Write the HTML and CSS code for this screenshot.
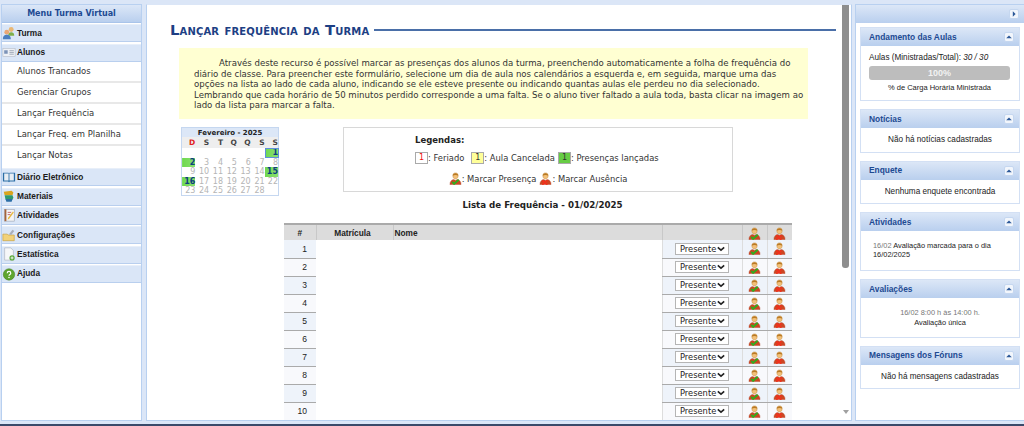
FILE: index.html
```html
<!DOCTYPE html>
<html lang="pt-BR">
<head>
<meta charset="utf-8">
<title>Lançar frequência da Turma</title>
<link rel="stylesheet" href="styles.css">
</head>
<body>
<svg class="defs" width="0" height="0" aria-hidden="true">
  <symbol id="person" viewBox="0 0 14 14">
    <path d="M4.200 4.500C4 2 5.200 1 7 1s3 1 2.800 3.500C9.600 6.400 8.400 7.500 7 7.500S4.400 6.400 4.200 4.500Z" fill="#f2c078" stroke="#c48a3c" stroke-width=".5"/>
    <path d="M4 4C4.300 .6 9.700 .6 10 4 8.500 2.900 5.500 2.900 4 4Z" fill="#b97a25"/>
    <path d="M1 13.500C1 10 3 8.200 5 8L7 9.200 9 8C11 8.200 13 10 13 13.500Z" fill="#cf4522" stroke="#a83c1c" stroke-width=".4"/>
  </symbol>
  <symbol id="presenca" viewBox="0 0 14 14">
    <use href="#person"/>
    <path d="M3.500 10.500L5.500 12.800 10.500 8.300" fill="none" stroke="#2fae1e" stroke-width="2"/>
  </symbol>
  <symbol id="ausencia" viewBox="0 0 14 14">
    <use href="#person"/>
    <path d="M3.500 9L9 13.800M9 9L3.500 13.800" fill="none" stroke="#f2301c" stroke-width="1.700"/>
  </symbol>
  <symbol id="collapse" viewBox="0 0 10 10"><path d="M1.500 6.500L5 3 8.500 6.500Z" fill="#2b5797"/></symbol>
</svg>

<div class="app">
  <aside class="menu">
    <h2 class="menu-title">Menu Turma Virtual</h2>
    <div class="menu-group">
      <svg class="mi" viewBox="0 0 16 16"><circle cx="10.500" cy="4" r="2.800" fill="#e9b774"/><path d="M7 11c0-3 1.500-4 3.500-4s3.500 1 3.500 4Z" fill="#7fb04a"/><circle cx="5.500" cy="7" r="2.800" fill="#e9a774"/><path d="M1 15c0-4 2-5 4.500-5S10 11 10 15Z" fill="#4a7fc0"/></svg>
      <span>Turma</span>
    </div>
    <div class="menu-group">
      <svg class="mi" viewBox="0 0 16 16"><rect x="1" y="4" width="14" height="9" fill="#eef1f6" stroke="#b6bcc8" stroke-width=".7"/><rect x="2.500" y="6" width="4" height="4" fill="#7c93b8"/><path d="M8.500 6.500h5M8.500 8.500h5M8.500 10.500h5" stroke="#9aa3b2"/></svg>
      <span>Alunos</span>
    </div>
    <ul class="submenu">
      <li>Alunos Trancados</li>
      <li>Gerenciar Grupos</li>
      <li>Lançar Frequência</li>
      <li>Lançar Freq. em Planilha</li>
      <li>Lançar Notas</li>
    </ul>
    <div class="menu-group">
      <svg class="mi" viewBox="0 0 16 16"><path d="M1 3h6.500l.5 1 .5-1H15v10H9l-1 1-1-1H1Z" fill="#2c6ea6"/><path d="M2.500 4h5v8h-5ZM8.500 4h5v8h-5Z" fill="#e8eef4"/></svg>
      <span>Diário Eletrônico</span>
    </div>
    <div class="menu-group">
      <svg class="mi" viewBox="0 0 16 16"><path d="M2 3l9-1 2 2-1 3H3Z" fill="#d9a520"/><path d="M3 7h9l1 3-1 2H4Z" fill="#2f9a70"/><path d="M4 11.500h8l-1 3H5Z" fill="#2c6ea6"/></svg>
      <span>Materiais</span>
    </div>
    <div class="menu-group">
      <svg class="mi" viewBox="0 0 16 16"><rect x="3" y="1.500" width="11" height="13.500" fill="#f3f4f6" stroke="#9aa3b2" stroke-width=".7"/><rect x="3" y="1.500" width="2" height="13.500" fill="#a5643a"/><path d="M7 11l5.500-7 1 1L8 12.500 6.500 13Z" fill="#e8b83a"/><path d="M6.500 5h4M6.500 7.500h3" stroke="#b63a3a" stroke-width=".8"/></svg>
      <span>Atividades</span>
    </div>
    <div class="menu-group">
      <svg class="mi" viewBox="0 0 16 16"><path d="M1 7h5l1 1h7v6.500H1Z" fill="#f2d27a" stroke="#c39a35" stroke-width=".7"/><path d="M8 7l4-5 2 1.500-3.500 4.500Z" fill="#a9afba"/></svg>
      <span>Configurações</span>
    </div>
    <div class="menu-group">
      <svg class="mi" viewBox="0 0 16 16"><path d="M3 1h7l3 3v11H3Z" fill="#f6f7f9" stroke="#aab0ba" stroke-width=".7"/><circle cx="11.500" cy="12.500" r="3" fill="#58a83a"/><path d="M11.500 10.800v3.400M9.800 12.500h3.400" stroke="#fff"/></svg>
      <span>Estatística</span>
    </div>
    <div class="menu-group">
      <svg class="mi" viewBox="0 0 16 16"><circle cx="8" cy="8.500" r="6.500" fill="#5fa52f" stroke="#3f7d1c" stroke-width=".6"/><path d="M6 7c0-2.500 4-2.500 4 0 0 1.500-2 1.500-2 3" fill="none" stroke="#fff" stroke-width="1.400"/><circle cx="8" cy="12" r=".9" fill="#fff"/></svg>
      <span>Ajuda</span>
    </div>
  </aside>

  <main class="center">
    <div class="content">
      <h1 class="page-title"><span>Lançar frequência da Turma</span></h1>
      <p class="intro">
        <span class="indent"></span>Através deste recurso é possível marcar as presenças dos alunos da turma, preenchendo automaticamente a folha de frequência do diário de classe. Para preencher este formulário, selecione um dia de aula nos calendários a esquerda e, em seguida, marque uma das opções na lista ao lado de cada aluno, indicando se ele esteve presente ou indicando quantas aulas ele perdeu no dia selecionado. Lembrando que cada horário de 50 minutos perdido corresponde a uma falta. Se o aluno tiver faltado a aula toda, basta clicar na imagem ao lado da lista para marcar a falta.
      </p>
      <div class="top-row">
        <table class="cal">
          <caption>Fevereiro - 2025</caption>
          <thead><tr><th class="sun">D</th><th>S</th><th>T</th><th>Q</th><th>Q</th><th>S</th><th>S</th></tr></thead>
          <tbody>
            <tr><td></td><td></td><td></td><td></td><td></td><td></td><td class="on sel">1</td></tr>
            <tr><td class="on">2</td><td>3</td><td>4</td><td>5</td><td>6</td><td>7</td><td>8</td></tr>
            <tr><td>9</td><td>10</td><td>11</td><td>12</td><td>13</td><td>14</td><td class="on">15</td></tr>
            <tr><td class="on">16</td><td>17</td><td>18</td><td>19</td><td>20</td><td>21</td><td>22</td></tr>
            <tr><td>23</td><td>24</td><td>25</td><td>26</td><td>27</td><td>28</td><td></td></tr>
          </tbody>
        </table>
        <div class="legend">
          <div class="legend-title">Legendas:</div>
          <div class="legend-row">
            <span class="key key-red">1</span><span>: Feriado</span>
            <span class="key key-yellow">1</span><span>: Aula Cancelada</span>
            <span class="key key-green">1</span><span>: Presenças lançadas</span>
          </div>
          <div class="legend-row legend-icons">
            <svg class="ico"><use href="#presenca"/></svg><span>: Marcar Presença</span>
            <svg class="ico"><use href="#ausencia"/></svg><span>: Marcar Ausência</span>
          </div>
        </div>
      </div>
      <h3 class="list-title">Lista de Frequência - 01/02/2025</h3>
      <table class="freq">
        <thead>
          <tr><th class="c-n">#</th><th class="c-m">Matrícula</th><th class="c-name">Nome</th><th class="c-s"></th><th class="c-i"><svg class="ico"><use href="#presenca"/></svg></th><th class="c-i"><svg class="ico"><use href="#ausencia"/></svg></th></tr>
        </thead>
        <tbody>
          <tr><td class="num">1</td><td class="blank" colspan="2"></td><td class="sel-c"><span class="sel-box">Presente<svg viewBox="0 0 10 6"><path d="M1 1l4 3.500L9 1" fill="none" stroke="#222" stroke-width="2"/></svg></span></td><td class="ic"><svg class="ico"><use href="#presenca"/></svg></td><td class="ic"><svg class="ico"><use href="#ausencia"/></svg></td></tr>
          <tr><td class="num">2</td><td class="blank" colspan="2"></td><td class="sel-c"><span class="sel-box">Presente<svg viewBox="0 0 10 6"><path d="M1 1l4 3.500L9 1" fill="none" stroke="#222" stroke-width="2"/></svg></span></td><td class="ic"><svg class="ico"><use href="#presenca"/></svg></td><td class="ic"><svg class="ico"><use href="#ausencia"/></svg></td></tr>
          <tr><td class="num">3</td><td class="blank" colspan="2"></td><td class="sel-c"><span class="sel-box">Presente<svg viewBox="0 0 10 6"><path d="M1 1l4 3.500L9 1" fill="none" stroke="#222" stroke-width="2"/></svg></span></td><td class="ic"><svg class="ico"><use href="#presenca"/></svg></td><td class="ic"><svg class="ico"><use href="#ausencia"/></svg></td></tr>
          <tr><td class="num">4</td><td class="blank" colspan="2"></td><td class="sel-c"><span class="sel-box">Presente<svg viewBox="0 0 10 6"><path d="M1 1l4 3.500L9 1" fill="none" stroke="#222" stroke-width="2"/></svg></span></td><td class="ic"><svg class="ico"><use href="#presenca"/></svg></td><td class="ic"><svg class="ico"><use href="#ausencia"/></svg></td></tr>
          <tr><td class="num">5</td><td class="blank" colspan="2"></td><td class="sel-c"><span class="sel-box">Presente<svg viewBox="0 0 10 6"><path d="M1 1l4 3.500L9 1" fill="none" stroke="#222" stroke-width="2"/></svg></span></td><td class="ic"><svg class="ico"><use href="#presenca"/></svg></td><td class="ic"><svg class="ico"><use href="#ausencia"/></svg></td></tr>
          <tr><td class="num">6</td><td class="blank" colspan="2"></td><td class="sel-c"><span class="sel-box">Presente<svg viewBox="0 0 10 6"><path d="M1 1l4 3.500L9 1" fill="none" stroke="#222" stroke-width="2"/></svg></span></td><td class="ic"><svg class="ico"><use href="#presenca"/></svg></td><td class="ic"><svg class="ico"><use href="#ausencia"/></svg></td></tr>
          <tr><td class="num">7</td><td class="blank" colspan="2"></td><td class="sel-c"><span class="sel-box">Presente<svg viewBox="0 0 10 6"><path d="M1 1l4 3.500L9 1" fill="none" stroke="#222" stroke-width="2"/></svg></span></td><td class="ic"><svg class="ico"><use href="#presenca"/></svg></td><td class="ic"><svg class="ico"><use href="#ausencia"/></svg></td></tr>
          <tr><td class="num">8</td><td class="blank" colspan="2"></td><td class="sel-c"><span class="sel-box">Presente<svg viewBox="0 0 10 6"><path d="M1 1l4 3.500L9 1" fill="none" stroke="#222" stroke-width="2"/></svg></span></td><td class="ic"><svg class="ico"><use href="#presenca"/></svg></td><td class="ic"><svg class="ico"><use href="#ausencia"/></svg></td></tr>
          <tr><td class="num">9</td><td class="blank" colspan="2"></td><td class="sel-c"><span class="sel-box">Presente<svg viewBox="0 0 10 6"><path d="M1 1l4 3.500L9 1" fill="none" stroke="#222" stroke-width="2"/></svg></span></td><td class="ic"><svg class="ico"><use href="#presenca"/></svg></td><td class="ic"><svg class="ico"><use href="#ausencia"/></svg></td></tr>
          <tr><td class="num">10</td><td class="blank" colspan="2"></td><td class="sel-c"><span class="sel-box">Presente<svg viewBox="0 0 10 6"><path d="M1 1l4 3.500L9 1" fill="none" stroke="#222" stroke-width="2"/></svg></span></td><td class="ic"><svg class="ico"><use href="#presenca"/></svg></td><td class="ic"><svg class="ico"><use href="#ausencia"/></svg></td></tr>
        </tbody>
      </table>
    </div>
    <div class="scrollbar">
      <div class="thumb"></div>
      <div class="arrow"></div>
    </div>
  </main>

  <aside class="side">
    <div class="side-head"><span class="tool"><svg viewBox="0 0 10 10"><path d="M3.500 1.500L7 5 3.500 8.500Z" fill="#2b5797"/></svg></span></div>
    <section class="panel">
      <header class="panel-head"><span>Andamento das Aulas</span><span class="tool"><svg><use href="#collapse"/></svg></span></header>
      <div class="panel-body p-progress">
        <div class="aulas">Aulas (Ministradas/Total): <em>30 / 30</em></div>
        <div class="bar">100%</div>
        <div class="bar-note">% de Carga Horária Ministrada</div>
      </div>
    </section>
    <section class="panel">
      <header class="panel-head"><span>Notícias</span><span class="tool"><svg><use href="#collapse"/></svg></span></header>
      <div class="panel-body msg">Não há notícias cadastradas</div>
    </section>
    <section class="panel">
      <header class="panel-head"><span>Enquete</span><span class="tool"><svg><use href="#collapse"/></svg></span></header>
      <div class="panel-body msg">Nenhuma enquete encontrada</div>
    </section>
    <section class="panel">
      <header class="panel-head"><span>Atividades</span><span class="tool"><svg><use href="#collapse"/></svg></span></header>
      <div class="panel-body p-ativ"><span class="date">16/02</span> Avaliação marcada para o dia 16/02/2025</div>
    </section>
    <section class="panel">
      <header class="panel-head"><span>Avaliações</span><span class="tool"><svg><use href="#collapse"/></svg></span></header>
      <div class="panel-body p-aval"><div class="date">16/02 8:00 h às 14:00 h.</div><div>Avaliação única</div></div>
    </section>
    <section class="panel">
      <header class="panel-head"><span>Mensagens dos Fóruns</span><span class="tool"><svg><use href="#collapse"/></svg></span></header>
      <div class="panel-body msg">Não há mensagens cadastradas</div>
    </section>
  </aside>
</div>
<div class="bottom-strip"></div>
</body>
</html>
```
FILE: styles.css
```css
* { box-sizing: border-box; }
html, body { margin: 0; height: 426px; overflow: hidden; }
body { background: #dbe6f7; font-family: "DejaVu Sans", Verdana, sans-serif; color: #222; }
.defs { position: absolute; }

.app { display: flex; height: 421px; padding: 4px 0 0 1px; gap: 3px; overflow: hidden; }

/* left menu */
.menu { width: 141px; flex: none; background: #fff; border: 1px solid #b8d0f0; }
.menu-title { margin: 0; height: 18px; font: bold 8px/18px "DejaVu Sans", sans-serif; color: #1d4a92; text-align: center; background: linear-gradient(#dce7f7, #b9cfee); border-bottom: 1px solid #a9c4ea; }
.menu-group { display: flex; align-items: center; height: 18px; margin-top: 1.400px; padding-bottom: 1px; background: #dae6f7; border-top: 1px solid #e8eff9; border-bottom: 1px solid #b9cfee; font: bold 8.300px/1 "Liberation Sans", Arial, sans-serif; color: #1a1a1a; }
.menu-group span { margin-left: 1px; }
.mi { width: 14px; height: 14px; flex: none; }
.submenu { list-style: none; margin: 0; padding: 0; }
.submenu li { height: 21px; padding-left: 15px; font-size: 8.450px; line-height: 19px; color: #333; border-bottom: 2px solid #e8e8e8; background: #fff; }
.submenu li:last-child { border-bottom: none; }

/* center */
.center { width: 706px; flex: none; margin-left: 1px; display: flex; background: #fff; border: 1px solid #b8d0f0; border-top-color: #dbe6f7; overflow: hidden; }
.content { width: 695px; flex: none; padding: 14px 0 0 23px; overflow: hidden; }
.page-title { margin: 0 6px 0 0; display: flex; align-items: center; gap: 5px; font: bold 14.800px/22px "DejaVu Sans", sans-serif; font-variant: small-caps; color: #1d3f84; white-space: nowrap; letter-spacing: .15px; }
.page-title::after { content: ""; flex: 1; height: 2px; background: #4a6fa8; }
.intro { margin: 7px 0 0 9px; width: 629px; height: 71px; padding: 10px 4px 0 15px; background: #ffffd2; font-size: 8.600px; line-height: 10.500px; color: #333; }
.indent { display: inline-block; width: 25px; }

.top-row { display: flex; align-items: flex-start; height: 65px; margin-top: 8px; }
.cal { width: 98px; margin: 0 0 0 11px; border-collapse: collapse; table-layout: fixed; border: 1px solid #c5d7f0; border-top: 0; font-size: 8px; }
.cal caption { height: 10px; background: #dce7f7; border: 1px solid #c5d7f0; border-bottom: 0; font: bold 7px/10px "DejaVu Sans", sans-serif; color: #222; }
.cal th { height: 11px; padding: 0; background: #eee; font: bold 7.500px/10px "DejaVu Sans", sans-serif; color: #444; text-align: right; }
.cal th.sun { color: #e02020; }
.cal td { height: 9.500px; padding: 0; text-align: right; font: 8px/9px "DejaVu Sans", sans-serif; color: #b5b5b5; background: #fff; }
.cal td.on { background: linear-gradient(90deg, #6ed850, #8ae070); color: #0d3f80; font-weight: bold; }
.cal td.sel { outline: 1px solid #5e8fdc; outline-offset: -1px; }
.legend { width: 390px; height: 65px; margin: 0 0 0 64px; border: 1px solid #d8d8d8; font-size: 8.400px; color: #333; }
.legend-title { margin: 6px 0 0 71px; font-weight: bold; font-size: 8.500px; line-height: 12px; color: #222; }
.legend-row { margin: 6px 0 0 71px; display: flex; align-items: center; white-space: nowrap; line-height: 12px; height: 12px; }
.legend-icons { margin: 7px 0 0; height: 15px; justify-content: center; }
.key { display: block; width: 13px; height: 12px; border: 1px solid #aaa; text-align: center; font-size: 8px; line-height: 10px; }
.key-red { color: #f01010; background: #fff; }
.key-yellow { background: #ffff99; margin-left: 7px; }
.key-green { background: #66cc44; margin-left: 3px; }
.ico { width: 13px; height: 13px; vertical-align: middle; }
.legend-icons .ico:nth-of-type(2) { margin-left: 3px; }

.list-title { margin: 6px 0 0 0; padding-left: 73px; text-align: center; font: bold 8.700px/14px "DejaVu Sans", sans-serif; color: #222; }

.freq { margin: 11px 0 0 114px; width: 508px; table-layout: fixed; border-collapse: collapse; font-size: 8.500px; }
.freq th { height: 16px; padding: 0; background: #dcdcdc; border-top: 2px solid #aaa; font: bold 8.300px/14px "Liberation Sans", Arial, sans-serif; color: #222; text-align: center; border-left: 1px solid #c8c8c8; }
.freq th:first-child { border-left: 0; }
.c-n { width: 32px; } .c-m { width: 77px; } .c-name { width: 269px; } .c-s { width: 80px; } .c-i { width: 25px; }
.freq th.c-m { padding-right: 4px; }
.freq th.c-name { text-align: left; padding-left: 1px; }
.freq td { height: 18px; padding: 0; border-bottom: 1px solid #aaa; }
.freq .num { text-align: right; padding-right: 9px; background: #eef3fa; font: 8.500px/1 "Liberation Sans", Arial, sans-serif; color: #222; }
.freq tr:nth-child(even) .num, .freq tr:nth-child(even) .sel-c, .freq tr:nth-child(even) .ic { background: #f8f9fc; }
.freq .blank { background: #fff; border-bottom: 0; }
.freq .sel-c { background: #eef3fa; border-left: 1px solid #ddd; text-align: center; }
.freq .ic { background: #eef3fa; text-align: center; border-left: 1px solid #ddd; }
.sel-box { display: inline-flex; align-items: center; justify-content: space-between; width: 54px; height: 12px; padding: 0 3px 0 4px; background: #fff; border: 1px solid #b5b5b5; font-size: 8.300px; line-height: 1; color: #222; vertical-align: middle; }
.sel-box svg { width: 8px; height: 6px; }

/* scrollbar */
.scrollbar { width: 9px; flex: none; display: flex; flex-direction: column; justify-content: space-between; padding-right: 2px; }
.thumb { height: 263px; background: #8e8e8e; border-radius: 0 0 3px 3px; }
.arrow { width: 0; height: 0; margin: 0 0 6px 1px; border: 3px solid transparent; border-top: 4px solid #a0a0a0; border-bottom: 0; }

/* right column */
.side { width: 169px; flex: none; background: #fff; border: 1px solid #b8d0f0; border-right: 0; padding-left: 4px; display: flex; flex-direction: column; align-items: flex-start; gap: 8px; }
.side-head { align-self: stretch; margin: 0 0 -4px -4px; height: 18px; background: linear-gradient(#dce7f7, #b9cfee); display: flex; justify-content: flex-end; align-items: center; padding-right: 5px; }
.tool { width: 10px; height: 10px; flex: none; display: block; background: #f2f6fc; border: 1px solid #c5d7f0; border-radius: 2px; }
.tool svg { display: block; width: 8px; height: 8px; }
.panel { width: 160px; border: 1px solid #d3e0f4; flex: none; }
.panel-head { display: flex; align-items: center; justify-content: space-between; height: 18px; padding: 0 5px 0 8px; background: linear-gradient(#dce7f7, #b9cfee); font: bold 8.400px/1 "Liberation Sans", Arial, sans-serif; color: #1d4a92; }
.panel-body { font: 8.200px/10px "Liberation Sans", Arial, sans-serif; color: #222; }
.msg { height: 23.500px; padding-top: 7px; text-align: center; }
.p-progress { height: 54px; padding: 7px 9px 0 8px; }
.aulas { white-space: nowrap; }
.bar { height: 14px; margin-top: 3px; background: #bdbdbd; border-radius: 3px; color: #f2f2f2; font-weight: bold; font-size: 9px; line-height: 14px; text-align: center; }
.bar-note { margin-top: 3px; text-align: center; font-size: 7.500px; }
.p-ativ { height: 39px; padding: 11px 14px 0 12px; font-size: 7.400px; line-height: 8.500px; }
.date { color: #777; }
.p-aval { height: 38.500px; padding: 10px 0 0; text-align: center; font-size: 7.400px; line-height: 9.500px; }
.bottom-strip { height: 5px; background: linear-gradient(#dbe6f7 0, #dbe6f7 60%, #3a4a6a 60%); }
```
